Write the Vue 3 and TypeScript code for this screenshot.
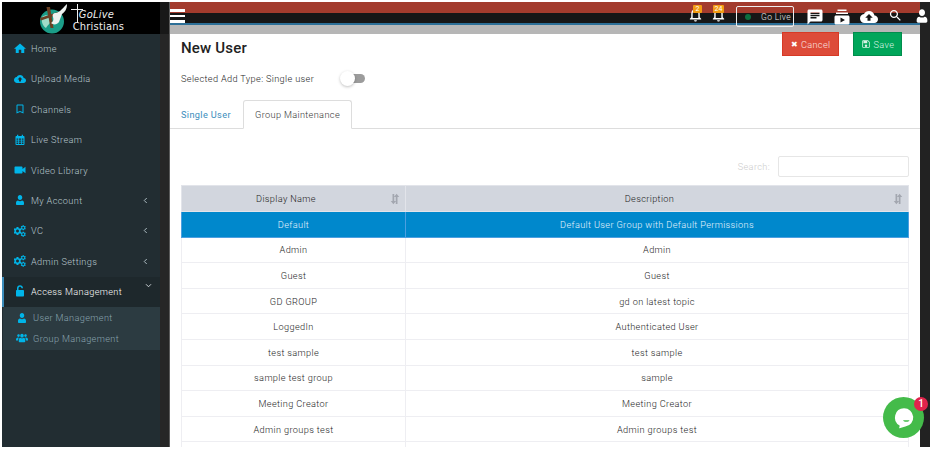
<script setup lang="ts">
interface MenuItem {
  label: string;
  icon: string;
  arrow?: boolean;
}

const menu: MenuItem[] = [
  { label: 'Home', icon: 'home' },
  { label: 'Upload Media', icon: 'cloud' },
  { label: 'Channels', icon: 'bookmark' },
  { label: 'Live Stream', icon: 'calendar' },
  { label: 'Video Library', icon: 'video' },
  { label: 'My Account', icon: 'user', arrow: true },
  { label: 'VC', icon: 'cogs', arrow: true },
  { label: 'Admin Settings', icon: 'cogs', arrow: true },
];

const subMenu = [
  { label: 'User Management', icon: 'user' },
  { label: 'Group Management', icon: 'users' },
];

const groups = [
  { name: 'Default', desc: 'Default User Group with Default Permissions' },
  { name: 'Admin', desc: 'Admin' },
  { name: 'Guest', desc: 'Guest' },
  { name: 'GD GROUP', desc: 'gd on latest topic' },
  { name: 'LoggedIn', desc: 'Authenticated User' },
  { name: 'test sample', desc: 'test sample' },
  { name: 'sample test group', desc: 'sample' },
  { name: 'Meeting Creator', desc: 'Meeting Creator' },
  { name: 'Admin groups test', desc: 'Admin groups test' },
  { name: '', desc: '' },
];
</script>

<template>
  <svg class="defs" aria-hidden="true">
    <symbol id="i-home" viewBox="0 0 24 24"><path d="M12 3 0 13.500h3.500V22h6v-6.500h5V22h6v-8.500H24z" /></symbol>
    <symbol id="i-cloud" viewBox="0 0 24 24"><path d="M19.350 10.040C18.670 6.590 15.640 4 12 4 9.110 4 6.600 5.640 5.350 8.040 2.340 8.360 0 10.910 0 14c0 3.310 2.690 6 6 6h13c2.760 0 5-2.240 5-5 0-2.640-2.050-4.780-4.650-4.960zM14 13v4h-4v-4H7l5-5 5 5h-3z" /></symbol>
    <symbol id="i-bookmark" viewBox="0 0 24 24"><path d="M17 3H7c-1.100 0-2 .9-2 2v16l7-3 7 3V5c0-1.100-.9-2-2-2zm0 15-5-2.180L7 18V5h10v13z" /></symbol>
    <symbol id="i-calendar" viewBox="0 0 24 24"><path fill-rule="evenodd" d="M5 4h1V1.500h2.500V4h7V1.500H18V4h1c1.100 0 2 .9 2 2v14c0 1.100-.9 2-2 2H5c-1.100 0-2-.9-2-2V6c0-1.100.9-2 2-2zm0 5v2.500h3V9zm4.500 0v2.500h5V9zm6.500 0v2.500h3V9zM5 13v2.500h3V13zm4.500 0v2.500h5V13zm6.500 0v2.500h3V13zM5 17v3h3v-3zm4.500 0v3h5v-3zm6.500 0v3h3v-3z" /></symbol>
    <symbol id="i-video" viewBox="0 0 24 24"><path d="M17 10V6.500c0-.8-.7-1.500-1.500-1.500h-13C1.700 5 1 5.700 1 6.500v11c0 .8.700 1.500 1.500 1.500h13c.8 0 1.500-.7 1.500-1.500V14l6 4.500v-13z" /></symbol>
    <symbol id="i-user" viewBox="0 0 24 24"><path d="M12 12c2.700 0 4.500-2.300 4.500-5S14.700 2 12 2 7.500 4.300 7.500 7s1.800 5 4.500 5zm-4 1c-2.500.3-4 2-4 5v2c0 1.100.9 2 2 2h12c1.100 0 2-.9 2-2v-2c0-3-1.500-4.700-4-5-1 .8-2.500 1.300-4 1.300S9 13.800 8 13z" /></symbol>
    <symbol id="i-users" viewBox="0 0 24 24"><path d="M12 11c2 0 3.500-1.600 3.500-3.700S14 3.500 12 3.500 8.500 5.200 8.500 7.300 10 11 12 11zM5 10c1.500 0 2.600-1.200 2.600-2.800S6.500 4.500 5 4.500 2.400 5.700 2.400 7.200 3.500 10 5 10zm14 0c1.500 0 2.600-1.200 2.600-2.800S20.500 4.500 19 4.500s-2.600 1.200-2.600 2.700S17.500 10 19 10zM8.700 11.500c-2 .3-3.200 2-3.200 4.500v3c0 .8.700 1.500 1.500 1.500h10c.8 0 1.500-.7 1.500-1.500v-3c0-2.500-1.200-4.200-3.200-4.500-.9.800-2 1.200-3.300 1.200s-2.400-.4-3.300-1.200zM4 11c-2 .2-4 1.500-4 4.300V17h4c0-2.300.6-4.300 2.200-5.500-.7-.1-1.500-.3-2.200-.5zm16 0c-.7.2-1.500.4-2.200.5C19.400 12.700 20 14.700 20 17h4v-1.700c0-2.800-2-4.100-4-4.300z" /></symbol>
    <symbol id="i-gear" viewBox="0 0 24 24"><path fill-rule="evenodd" d="M19.140 12.940c.04-.3.06-.61.06-.94 0-.32-.02-.64-.07-.94l2.030-1.580c.18-.14.23-.41.12-.61l-1.920-3.320c-.12-.22-.37-.29-.59-.22l-2.390.96c-.5-.38-1.030-.7-1.620-.94l-.36-2.540c-.04-.24-.24-.41-.48-.41h-3.840c-.24 0-.43.17-.47.41l-.36 2.540c-.59.24-1.130.57-1.620.94l-2.390-.96c-.22-.08-.47 0-.59.22L2.740 8.870c-.12.21-.08.47.12.61l2.030 1.580c-.05.3-.09.63-.09.94s.02.64.07.94l-2.030 1.580c-.18.14-.23.41-.12.61l1.920 3.320c.12.22.37.29.59.22l2.390-.96c.5.38 1.030.7 1.620.94l.36 2.540c.05.24.24.41.48.41h3.840c.24 0 .44-.17.47-.41l.36-2.540c.59-.24 1.130-.56 1.620-.94l2.390.96c.22.08.47 0 .59-.22l1.920-3.320c.12-.22.07-.47-.12-.61l-2.010-1.580zM12 15.600c-1.980 0-3.600-1.620-3.600-3.600s1.620-3.600 3.600-3.600 3.600 1.620 3.600 3.600-1.620 3.600-3.600 3.600z" /></symbol>
    <symbol id="i-cogs" viewBox="0 0 24 24">
      <use href="#i-gear" x="-3" y="2" width="20" height="20" />
      <use href="#i-gear" x="12" y="-1" width="13" height="13" />
      <use href="#i-gear" x="12" y="12" width="13" height="13" />
    </symbol>
    <symbol id="i-lock" viewBox="0 0 24 24"><path d="M18 10h-1H9V6.500c0-1.700 1.300-3 3-3s3 1.300 3 3H18c0-3.400-2.600-6-6-6S6 3.100 6 6.500V10c-1.100 0-2 .9-2 2v9c0 1.100.9 2 2 2h12c1.100 0 2-.9 2-2v-9c0-1.100-.9-2-2-2z" /></symbol>
    <symbol id="i-bell" viewBox="0 0 24 24"><path d="M12 22c1.100 0 2-.9 2-2h-4c0 1.100.9 2 2 2zm6-6v-5c0-3.070-1.630-5.640-4.500-6.320V4c0-.83-.67-1.500-1.500-1.500s-1.500.67-1.500 1.500v.68C7.640 5.360 6 7.920 6 11v5l-2 2v1h16v-1l-2-2zm-2 1H8v-6c0-2.480 1.510-4.500 4-4.500s4 2.020 4 4.500v6z" /></symbol>
    <symbol id="i-chat" viewBox="0 0 24 24"><path d="M20 2H4c-1.100 0-1.990.9-1.990 2L2 22l4-4h14c1.100 0 2-.9 2-2V4c0-1.100-.9-2-2-2zM6 9h12v2H6V9zm8 5H6v-2h8v2zm4-6H6V6h12v2z" /></symbol>
    <symbol id="i-subs" viewBox="0 0 24 24"><path d="M20 8H4V6h16v2zm-2-6H6v2h12V2zm4 10v8c0 1.100-.9 2-2 2H4c-1.100 0-2-.9-2-2v-8c0-1.100.9-2 2-2h16c1.100 0 2 .9 2 2zm-6 4-6-3.270v6.530L16 16z" /></symbol>
    <symbol id="i-search" viewBox="0 0 24 24"><path d="M15.500 14h-.79l-.28-.27C15.410 12.590 16 11.110 16 9.500 16 5.910 13.090 3 9.500 3S3 5.910 3 9.500 5.910 16 9.500 16c1.610 0 3.090-.59 4.230-1.570l.27.28v.79l5 4.990L20.490 19l-4.990-5zm-6 0C7.010 14 5 11.990 5 9.500S7.010 5 9.500 5 14 7.010 14 9.500 11.990 14 9.500 14z" /></symbol>
    <symbol id="i-save" viewBox="0 0 24 24"><path d="M17 3H5c-1.110 0-2 .9-2 2v14c0 1.100.89 2 2 2h14c1.100 0 2-.9 2-2V7l-4-4zm2 16H5V5h1v5h9V5h1.200L19 7.800zM12 13a3 3 0 1 0 0 6 3 3 0 0 0 0-6z" /></symbol>
    <symbol id="i-sort" viewBox="0 0 24 24"><path d="M7 2h3.500v14H14l-5.200 6.500L3.500 16H7zM17 22h-3.500V8H10l5.200-6.500L20.500 8H17z" /></symbol>
  </svg>

  <div class="app">
    <aside class="sidebar">
      <div class="logo">
        <svg class="logo-mark" viewBox="0 0 30 32">
          <circle cx="14" cy="19.500" r="12" fill="#1b9d88" />
          <path d="M4 15c4-3 8-2 9 2s-3 5-5 9c-3-2-5-6-4-11z" fill="#9fdcc9" />
          <path d="M8.500 5H12l3.500 21H12.500z" fill="#6b3f22" />
          <path d="M2 16 20 10l.6 2.600L3 18.500z" fill="#6b3f22" />
          <path d="M29 2c0 5-2 8-5 10l-3 8c-2 3-6 3-8 1 2-1 3-3 2-6-1-2 0-4 3-4 1 0 2-1 4-2 2-2 4-4 7-7z" fill="#eef2f0" />
        </svg>
        <div class="logo-text">
          <span class="logo-top">GoLive</span>
          <span class="logo-bottom">Christians</span>
          <i class="logo-cross-v"></i>
          <i class="logo-cross-h"></i>
        </div>
      </div>
      <nav class="menu">
        <a v-for="item in menu" :key="item.label" class="menu-item">
          <svg class="menu-ico"><use :href="`#i-${item.icon}`" /></svg>
          <span>{{ item.label }}</span>
          <svg v-if="item.arrow" class="chev" viewBox="0 0 6 8"><path d="M4.500 1 1.500 4l3 3" /></svg>
        </a>
        <a class="menu-item menu-item--open">
          <svg class="menu-ico"><use href="#i-lock" /></svg>
          <span>Access Management</span>
          <svg class="chev chev--down" viewBox="0 0 8 6"><path d="M1 1.500 4 4.500l3-3" /></svg>
        </a>
        <div class="submenu">
          <a v-for="item in subMenu" :key="item.label" class="sub-item">
            <svg class="menu-ico"><use :href="`#i-${item.icon}`" /></svg>
            <span>{{ item.label }}</span>
          </a>
        </div>
      </nav>
    </aside>
    <div class="gutter gutter--left"><div class="gutter-top"></div></div>

    <main class="main">
      <header class="topbar">
        <button class="burger" type="button"><i></i><i></i><i></i></button>
        <div class="top-actions">
          <span class="bell">
            <svg><use href="#i-bell" /></svg>
            <b>2</b>
          </span>
          <span class="bell bell--wide">
            <svg><use href="#i-bell" /></svg>
            <b>24</b>
          </span>
          <span class="golive"><i></i>Go Live</span>
          <svg class="top-ico top-ico--chat"><use href="#i-chat" /></svg>
          <svg class="top-ico top-ico--subs"><use href="#i-subs" /></svg>
          <svg class="top-ico top-ico--cloud"><use href="#i-cloud" /></svg>
          <svg class="top-ico top-ico--search"><use href="#i-search" /></svg>
          <svg class="top-ico top-ico--user"><use href="#i-user" /></svg>
        </div>
      </header>

      <section class="head">
        <h1>New User</h1>
        <div class="head-btns">
          <button class="btn btn--cancel" type="button"><span class="btn-x">✖</span>Cancel</button>
          <button class="btn btn--save" type="button"><svg><use href="#i-save" /></svg>Save</button>
        </div>
      </section>

      <div class="add-type">
        <span>Selected Add Type: Single user</span>
        <span class="toggle"><i></i></span>
      </div>

      <div class="tabs">
        <a class="tab">Single User</a>
        <a class="tab tab--active">Group Maintenance</a>
      </div>

      <div class="search-row">
        <label>Search:</label>
        <input type="text" />
      </div>

      <table class="grid">
        <colgroup>
          <col class="col-name" />
          <col />
        </colgroup>
        <thead>
          <tr>
            <th>Display Name<svg class="sort"><use href="#i-sort" /></svg></th>
            <th>Description<svg class="sort"><use href="#i-sort" /></svg></th>
          </tr>
        </thead>
        <tbody>
          <tr v-for="(row, i) in groups" :key="i" :class="{ selected: i === 0 }">
            <td>{{ row.name }}</td>
            <td>{{ row.desc }}</td>
          </tr>
        </tbody>
      </table>
    </main>
    <div class="gutter gutter--right"></div>

    <div class="chat-fab">
      <svg viewBox="0 0 24 24" class="chat-bubble">
        <path d="M12 2a10 10 0 0 1 1.500 19.900C11 22.400 8.500 23.400 6.500 23.800c.5-1 .8-2 .7-3.100A10 10 0 0 1 12 2z" />
        <path class="chat-mouth" d="M11 15h7c-.5 1.200-1.700 1.700-3.500 1.700S11.500 16.200 11 15z" />
      </svg>
      <b>1</b>
    </div>
  </div>
</template>

<style>
html,
body {
  background: #fff;
}
</style>

<style scoped>
.defs {
  position: absolute;
  width: 0;
  height: 0;
}

.app {
  position: relative;
  display: grid;
  grid-template-columns: 158px 10px 750px 10px;
  width: 928px;
  height: 445px;
  margin: 2px 0 0 2px;
  overflow: hidden;
  font-family: Roboto, "Liberation Sans", sans-serif;
  font-size: 9.2px;
  font-weight: 300;
  letter-spacing: 0.35px;
  color: #1c1c1c;
}

.sidebar {
  background: #222d32;
  overflow: hidden;
}

.logo {
  display: flex;
  align-items: center;
  height: 32px;
  padding-left: 36px;
  background: #000;
}

.logo-mark {
  width: 30px;
  height: 32px;
  margin-right: 2px;
  flex: none;
}

.logo-text {
  position: relative;
  display: flex;
  flex-direction: column;
  align-items: flex-end;
  width: 54px;
  padding-top: 6px;
  font-family: "DejaVu Sans Condensed", "DejaVu Sans", sans-serif;
  font-weight: 400;
  color: #eee;
  line-height: 12px;
  letter-spacing: 0.2px;
}

.logo-top {
  padding-right: 10px;
  font-size: 11px;
  font-style: italic;
}

.logo-bottom {
  font-size: 11px;
}

.logo-cross-v {
  position: absolute;
  left: 7px;
  top: 1px;
  width: 1px;
  height: 19px;
  background: #eee;
}

.logo-cross-h {
  position: absolute;
  left: 1px;
  top: 6px;
  width: 12px;
  height: 1px;
  background: #eee;
}

.menu-item {
  display: flex;
  box-sizing: border-box;
  align-items: center;
  height: 30.4px;
  padding: 0 0 1.500px 12px;
  color: #b8c7ce;
}

.menu-ico {
  flex: none;
  width: 12px;
  height: 12px;
  margin-right: 5px;
  color: #00b5e9;
  fill: currentColor;
}

.menu-item > span {
  flex: 1;
}

.chev {
  width: 5px;
  height: 7px;
  margin-right: 12px;
  fill: none;
  stroke: #b8c7ce;
  stroke-width: 1.1;
}

.menu-item--open {
  height: 30px;
  padding-left: 10px;
  border-left: 2px solid #3c8dbc;
  background: #1e282c;
  color: #fff;
}

.chev--down {
  align-self: flex-start;
  width: 7px;
  height: 5px;
  margin: 6px 8px 0 0;
  stroke: #d8dee1;
}

.submenu {
  margin-left: 1px;
  padding: 1px 0;
  background: #2c3b41;
}

.sub-item {
  display: flex;
  box-sizing: border-box;
  align-items: center;
  height: 20.500px;
  padding: 0 0 1px 13px;
  color: #8aa4af;
}

.gutter {
  background: #262626;
}

.gutter--left {
  border-right: 1px solid #5a5a5a;
}

.gutter-top {
  height: 32px;
  background: #181818;
}

.gutter--right {
  background: #222;
}

.main {
  min-width: 0;
  background: #fff;
  display: flex;
  flex-direction: column;
}

.topbar {
  display: flex;
  flex: none;
  justify-content: space-between;
  height: 32px;
  background: linear-gradient(
    #a33b2d 0 11px,
    #161616 11px 21px,
    #2c6f97 21px 23px,
    #b6b6b6 23px
  );
}

.burger {
  display: flex;
  flex-direction: column;
  gap: 3px;
  width: 15px;
  margin-top: 7px;
  padding: 0;
  border: 0;
  background: none;
}

.burger i {
  display: block;
  height: 2.500px;
  background: #fff;
}

.top-actions {
  position: relative;
  z-index: 2;
  display: flex;
  align-items: flex-start;
  margin-right: -10px;
  color: #fff;
}

.bell {
  position: relative;
  width: 17px;
  height: 17px;
  margin: 4px 6px 0 0;
}

.bell svg {
  width: 17px;
  height: 17px;
  fill: #fff;
}

.bell b {
  position: absolute;
  left: 6px;
  top: -1px;
  min-width: 7px;
  height: 8px;
  padding: 0 1px;
  border-radius: 1px;
  background: #f39c12;
  color: #fff;
  font-size: 7px;
  font-weight: 400;
  line-height: 8px;
  letter-spacing: 0;
  text-align: center;
}

.bell--wide b {
  left: 3px;
  min-width: 9px;
}

.golive {
  display: flex;
  align-items: center;
  box-sizing: border-box;
  width: 58px;
  height: 21px;
  margin: 4px 0 0 3px;
  padding-left: 8px;
  border: 1px solid #eee;
  border-radius: 2px;
  color: #e8e8e8;
  font-size: 8.500px;
  white-space: nowrap;
}

.golive i {
  width: 6px;
  height: 6px;
  margin-right: 10px;
  border-radius: 50%;
  background: #0b6e3f;
}

.top-ico {
  flex: none;
  width: 18px;
  height: 18px;
  margin-top: 6px;
  fill: #fff;
}

.top-ico--chat {
  margin-left: 12px;
}

.top-ico--subs {
  margin-left: 9px;
}

.top-ico--cloud {
  margin-left: 9px;
}

.top-ico--search {
  width: 15px;
  height: 15px;
  margin-left: 10px;
}

.top-ico--user {
  width: 16px;
  height: 16px;
  margin-left: 11px;
}

.head {
  display: flex;
  flex: none;
  justify-content: space-between;
  height: 24px;
  margin-top: -2px;
  padding: 0 18px 0 11px;
}

.head h1 {
  margin: 4px 0 0;
  font-size: 15px;
  font-weight: 500;
  line-height: 24px;
  letter-spacing: 0.2px;
  color: #222;
}

.head-btns {
  display: flex;
  gap: 14px;
}

.btn {
  display: flex;
  align-items: center;
  justify-content: center;
  height: 24px;
  padding: 0;
  border: 1px solid transparent;
  color: #fff;
  font: inherit;
  letter-spacing: inherit;
}

.btn--cancel {
  width: 57px;
  background: #dd4b39;
  border-color: #d73925;
  color: #fbe4e0;
}

.btn--save {
  width: 49px;
  background: #00a65a;
  border-color: #008d4c;
  color: #d9f3e6;
}

.btn-x {
  margin-right: 3px;
  font-size: 8px;
  color: #fff;
}

.btn svg {
  width: 10px;
  height: 10px;
  margin-right: 3px;
  fill: currentColor;
}

.add-type {
  display: flex;
  flex: none;
  align-items: center;
  height: 20px;
  margin-top: 12px;
  padding-left: 11px;
}

.toggle {
  position: relative;
  width: 20px;
  height: 9px;
  margin-left: 31px;
  border-radius: 5px;
  background: #9c9c9c;
}

.toggle i {
  position: absolute;
  left: -5px;
  top: -3px;
  width: 15px;
  height: 15px;
  border-radius: 50%;
  background: #fff;
  box-shadow: 0 1px 3px rgba(0, 0, 0, 0.25);
}

.tabs {
  display: flex;
  flex: none;
  align-items: stretch;
  height: 28px;
  margin-top: 12px;
  padding-left: 11px;
  border-bottom: 1px solid #ddd;
}

.tab {
  display: flex;
  align-items: center;
  width: 62px;
  font-weight: 400;
  color: #3c8dbc;
}

.tab--active {
  justify-content: center;
  box-sizing: border-box;
  width: 109px;
  height: 29px;
  border: 1px solid #ddd;
  border-bottom-color: #fff;
  border-radius: 3px 3px 0 0;
  background: #fff;
  font-weight: 300;
  color: #333;
}

.search-row {
  display: flex;
  flex: none;
  align-items: center;
  justify-content: flex-end;
  height: 21px;
  margin-top: 27px;
  padding-right: 11px;
  color: #ccc;
}

.search-row input {
  box-sizing: border-box;
  width: 131px;
  height: 21px;
  margin-left: 8px;
  border: 1px solid #e6e6e6;
  border-radius: 2px;
  outline: none;
}

.grid {
  flex: none;
  width: 728px;
  margin: 8px 0 0 11px;
  border-collapse: collapse;
  table-layout: fixed;
}

.col-name {
  width: 224px;
}

.grid th {
  position: relative;
  height: 25px;
  padding: 0 15px 0 0;
  border: 1px solid #e2e4ea;
  background: #d2d6de;
  color: #1c1c1c;
  font-weight: 300;
  text-align: center;
}

.sort {
  position: absolute;
  right: 4px;
  top: 7px;
  width: 12px;
  height: 12px;
  fill: #a3a7b0;
}

.grid td {
  height: 24.600px;
  padding: 0;
  border: 1px solid #eeeef2;
  text-align: center;
  color: #1c1c1c;
}

.grid .selected td {
  border-color: #4d9fe0;
  background: #0088cc;
  color: #e6f4fc;
}

.chat-fab {
  position: absolute;
  left: 881px;
  top: 395px;
  display: flex;
  align-items: center;
  justify-content: center;
  width: 41px;
  height: 41px;
  border-radius: 50%;
  background: #44bb4a;
}

.chat-bubble {
  width: 22px;
  height: 23px;
  fill: #fff;
}

.chat-mouth {
  fill: #44bb4a;
}

.chat-fab b {
  position: absolute;
  right: -4px;
  top: 0;
  width: 14px;
  height: 14px;
  border-radius: 50%;
  background: #e0244c;
  color: #fff;
  font-size: 10px;
  font-weight: 500;
  line-height: 14px;
  letter-spacing: 0;
  text-align: center;
}
</style>
